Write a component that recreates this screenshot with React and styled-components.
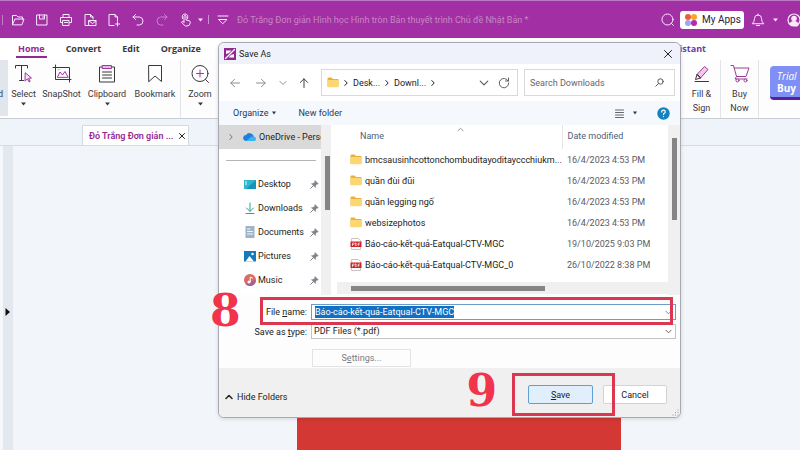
import React from "react";
import styled, { createGlobalStyle } from "styled-components";

const Global = createGlobalStyle`
  * { box-sizing: border-box; }
  body { margin: 0; overflow: hidden; }
  body, button, input, select { font: 9px/12px Roboto, "Open Sans", sans-serif; color: #222; }
  button, input, select { margin: 0; padding: 0; border: 0; background: none; border-radius: 0; outline: 0; }
  svg { display: block; flex: none; }
  u { text-underline-offset: 1px; }
`;

/* ---------- icons ---------- */
const Glyph = styled.svg`
  width: ${(p) => p.$w}px;
  height: ${(p) => p.$h || p.$w}px;
  fill: none;
  stroke: ${(p) => p.$c || "currentColor"};
  stroke-width: ${(p) => p.$s || 1};
  stroke-linecap: round;
  stroke-linejoin: round;
`;
const Icon = ({ w = 14, h = w, c, s, children }) => (
  <Glyph $w={w} $h={h} $c={c} $s={s} viewBox={`0 0 ${w} ${h}`} aria-hidden="true">{children}</Glyph>
);
const Caret = ({ w = 6 }) => (
  <Icon w={w} h={4}><path d={`M0 .5h${w}L${w / 2} 3.500z`} fill="currentColor" stroke="none" /></Icon>
);
const Chevron = ({ dir = "down", w = 8, c, s }) => {
  const d = { down: "M1 2.5 4 5.5 7 2.5", up: "M1 5.5 4 2.5 7 5.5", right: "M2.8 1.5 5.2 4 2.8 6.5" }[dir];
  return <Glyph $w={w} $c={c} $s={s} viewBox="0 0 8 8" aria-hidden="true"><path d={d} /></Glyph>;
};
const Folder = () => (
  <Icon w={12} h={11}>
    <path d="M.5 1.5q0-1 1-1h3l1.500 1.500h5q.5 0 .5.5v7H.5z" fill="#e9b13c" stroke="none" />
    <path d="M.5 3h11v6.500q0 .8-.8.8H1.300q-.8 0-.8-.8z" fill="#fbd671" stroke="none" />
  </Icon>
);
const Pdf = () => (
  <Icon w={12} h={12}>
    <path d="M2 .5h6.500L10.500 2.500v9H2z" fill="#fff" stroke="#b9a9aa" strokeWidth=".7" />
    <path d="M.5 3.500h11v5.500H.5z" fill="#cf2329" stroke="none" />
    <path d="M2.500 7.700V5h1q.8 0 .8.7t-.8.7h-1M5.300 5v2.700q1.700 0 1.700-1.300T5.300 5M8.300 7.700V5h1.400M8.300 6.300h1.100" stroke="#fff" strokeWidth=".6" />
  </Icon>
);
const Pin = () => (
  <Icon w={9} h={9} c="#7d848b">
    <path d="M5.300.8 8.200 3.700 6.800 4.300 5.500 5.700 5.300 7.500 1.500 3.700 3.300 3.500 4.600 2.200z" fill="#7d848b" strokeWidth=".6" />
    <path d="M3.200 5.800.8 8.200" />
  </Icon>
);
const UserIcon = () => (
  <Icon w={14} s={1.2}><circle cx="7" cy="7" r="6" /><circle cx="7" cy="5.500" r="2.200" fill="currentColor" /><path d="M3 11q.8-2.500 4-2.500t4 2.500-4 1.500T3 11" fill="currentColor" /></Icon>
);

/* ---------- application frame ---------- */
const Window = styled.div`
  position: relative;
  display: flex;
  flex-direction: column;
  height: 100vh;
  overflow: hidden;
  background: #f2f6fa;
`;
const TitleBar = styled.header`
  display: flex;
  align-items: center;
  flex: none;
  height: 38px;
  border-top: 1px solid #bd7bc4;
  background: #a32fa5;
  color: #fbeafb;
`;
const QuickTools = styled.div`
  display: flex;
  align-items: center;
  border-left: 1px solid #c77bc8;
  margin-left: 2px;
  padding-left: 3px;
  height: 10px;
`;
const BarButton = styled.button`
  display: grid;
  place-items: center;
  flex: none;
  width: ${(p) => p.$w || 24}px;
  height: 24px;
  color: ${(p) => (p.$dim ? "#cb83cc" : "#fbeafb")};
`;
const Split = styled.span`
  width: 1px;
  height: 9px;
  background: #cf8fd0;
`;
const DocTitle = styled.div`
  flex: 1;
  min-width: 0;
  padding-left: 4px;
  overflow: hidden;
  white-space: nowrap;
  color: #c986c4;
`;
const AccountTools = styled.div`
  display: flex;
  align-items: center;
  flex: none;
  width: 144px;
  overflow: hidden;
`;
const MyApps = styled.button`
  display: flex;
  align-items: center;
  flex: none;
  gap: 5px;
  width: 64px;
  height: 18px;
  padding-left: 5px;
  border-radius: 3px;
  background: #fff;
  font-size: 10px;
  color: #2b2330;
`;
const Tabs = styled.nav`
  display: flex;
  align-items: flex-start;
  flex: none;
  height: 22px;
  padding: 5px 92px 0 16px;
  gap: 17px;
  background: #fff;
  font-family: "Open Sans", sans-serif;
`;
const Tab = styled.a`
  padding: 0 2px 1px;
  border-bottom: 2px solid ${(p) => (p.$active ? "#95298f" : "transparent")};
  color: ${(p) => (p.$active ? "#95298f" : p.$accent ? "#6740a8" : "#3a3a3e")};
  font-weight: 700;
  text-decoration: none;
  margin-left: ${(p) => (p.$accent ? "auto" : 0)};
`;
const Ribbon = styled.div`
  display: flex;
  flex: none;
  height: 59px;
  border-bottom: 1px solid #c9cdd4;
  background: #fdfdfe;
`;
const Tool = styled.button`
  display: flex;
  flex-direction: column;
  align-items: center;
  flex: none;
  width: ${(p) => p.$w}px;
  padding-top: 4px;
  line-height: 14px;
  color: #38383c;
  white-space: nowrap;
  border-right: ${(p) => (p.$rule ? "1px solid #e2e4ea" : "0")};
  svg + span { margin-top: 4px; }
  span + svg { margin-top: 1px; }
`;
const HandTool = styled.button`
  display: flex;
  align-items: center;
  justify-content: flex-end;
  flex: none;
  width: 8px;
  height: 56px;
  overflow: hidden;
  background: #e1e5ec;
  padding: 12px 5px 0 0;
  color: #33415c;
`;
const Spacer = styled.div`
  flex: 1;
`;
const Trial = styled.button`
  display: flex;
  flex-direction: column;
  justify-content: center;
  align-self: flex-start;
  flex: none;
  width: 30px;
  height: 34px;
  margin: 6px 0 0 11px;
  padding-left: 7px;
  border-bottom: 3px solid #5a1f9c;
  border-radius: 4px 0 0 4px;
  background: #7f8ff5;
  color: #fff;
  font: 10px/12px "Open Sans", sans-serif;
  text-align: left;
`;
const DocTabs = styled.div`
  display: flex;
  align-items: flex-end;
  flex: none;
  height: 27px;
  padding-left: 82px;
  border-bottom: 1px solid #d7dce4;
  background: #eff3fa;
`;
const DocTab = styled.div`
  display: flex;
  align-items: center;
  justify-content: space-between;
  width: 107px;
  height: 20px;
  padding: 0 1px 0 6px;
  border: 1px solid #d7dae2;
  border-bottom: 0;
  background: #fff;
  color: #95298f;
  font-weight: 600;
  white-space: nowrap;
`;
const CloseButton = styled.button`
  display: grid;
  place-items: center;
  width: 10px;
  height: 12px;
  color: #222;
`;
const Canvas = styled.main`
  display: flex;
  flex: 1;
  min-height: 0;
`;
const SideHandle = styled.button`
  display: flex;
  align-items: center;
  width: 13px;
  padding: 28px 0 0 2px;
  border-left: 3px solid #f5f7fa;
  background: #e3e8ef;
  color: #111;
`;
const Sheet = styled.div`
  width: 324px;
  margin: 24px 0 0 284px;
  background: #d33835;
`;

/* ---------- dialog ---------- */
const Dialog = styled.section`
  position: absolute;
  top: 42px;
  left: 218px;
  right: 119px;
  min-width: 440px;
  border: 1px solid #a9a9b3;
  border-radius: 6px;
  background: #fff;
  box-shadow: 0 1px 4px #0002;
`;
const DialogTitle = styled.div`
  display: flex;
  align-items: center;
  gap: 3px;
  height: 21px;
  padding: 0 7px 0 5px;
  border-radius: 6px 6px 0 0;
  background: #eff2fa;
`;
const NavRow = styled.div`
  display: flex;
  align-items: center;
  height: 37px;
  padding: 0 5px 0 4px;
`;
const NavButton = styled.button`
  display: grid;
  place-items: center;
  flex: none;
  width: ${(p) => p.$w || 24}px;
  height: 20px;
  color: ${(p) => (p.$dim ? "#8d8d92" : "#404045")};
`;
const Box = styled.div`
  display: flex;
  align-items: center;
  height: 27px;
  border: 1px solid #d8d8df;
  background: #fff;
`;
const Address = styled(Box)`
  flex: 1;
  min-width: 0;
  gap: 3px;
  padding: 0 1px 0 5px;
  margin: 0 6px 0 4px;
`;
const Search = styled(Box)`
  width: 151px;
  flex: none;
  padding-right: 10px;
`;
const SearchInput = styled.input`
  flex: 1;
  min-width: 0;
  padding-left: 5px;
  &::placeholder { color: #66666c; opacity: 1; }
`;
const Toolbar = styled.div`
  display: flex;
  align-items: center;
  height: 24px;
  padding: 0 10px 0 14px;
  background: #f5f8fc;
`;
const ToolbarButton = styled.button`
  display: flex;
  align-items: center;
  gap: 4px;
  margin-right: ${(p) => p.$gap || 0}px;
  color: #243a5c;
`;
const Browser = styled.div`
  display: flex;
  height: 170px;
`;
const Places = styled.div`
  width: 102px;
  flex: none;
  overflow: hidden;
`;
const Place = styled.button`
  display: flex;
  align-items: center;
  width: 102px;
  height: 24px;
  gap: 2px;
  padding: 0 2px 0 ${(p) => (p.$root ? 8 : 25)}px;
  background: ${(p) => (p.$root ? "#d9d9d9" : "transparent")};
  white-space: nowrap;
  overflow: hidden;
  svg:first-child { margin-right: ${(p) => (p.$root ? 6 : 0)}px; }
  span { flex: 1; text-align: left; }
`;
const Rule = styled.hr`
  margin: 11px 5px 11px 7px;
  border: 0;
  border-top: 1px solid #b5b5b9;
`;
const Track = styled.div`
  flex: none;
  width: ${(p) => p.$w}px;
  padding: ${(p) => p.$top}px ${(p) => (p.$edge ? 1 : 3)}px 0 4px;
  background: #f0f0f1;
  border-right: ${(p) => (p.$edge ? "1px solid #fff" : "0")};
`;
const Thumb = styled.div`
  height: ${(p) => p.$h}px;
  background: #858585;
`;
const Files = styled.div`
  display: flex;
  flex-direction: column;
  flex: 1;
  min-width: 0;
  margin-left: 3px;
`;
const TableArea = styled.div`
  height: 157px;
  overflow: hidden;
`;
const FileTable = styled.table`
  width: 100%;
  table-layout: fixed;
  border-collapse: collapse;
  th, td { padding: 0; text-align: left; white-space: nowrap; }
  th { height: 24px; padding-bottom: 3px; font-weight: 400; color: #4c5e7c; }
  td { height: 21px; }
  th:first-child { padding-left: 25px; }
  th:last-child { width: 106px; padding-left: 5px; border-left: 1px solid #e6e6ea; }
  td:last-child { padding-left: 5px; color: #5b5b60; }
`;
const NameHead = styled.div`
  display: grid;
  grid-template-columns: 1fr 1fr 1fr;
  align-items: center;
  svg { justify-self: center; margin-top: -12px; }
`;
const FileName = styled.div`
  display: flex;
  align-items: center;
  gap: 3px;
  padding-left: 15px;
`;
const HTrack = styled.div`
  height: 12px;
  margin-left: 2px;
  padding: 4px 123px 3px 14px;
  background: #f0f0f1;
`;
const Form = styled.form`
  display: grid;
  grid-template-columns: 88px 1fr;
  gap: 3px 4px;
  height: 73px;
  padding: 9px 4px 0 0;
  background: #fdfdfd;
`;
const Label = styled.label`
  text-align: right;
  line-height: 16px;
`;
const Field = styled.div`
  position: relative;
  display: flex;
  align-items: center;
  justify-content: space-between;
  height: ${(p) => (p.$focus ? 16 : 15)}px;
  padding: 0 3px 0 2px;
  border: 1px solid ${(p) => (p.$focus ? "#6d9cc8" : "#c4c4c8")};
  background: #fff;
`;
const NameInput = styled.input`
  field-sizing: content;
  height: 12px;
  margin-left: 1px;
  background: #0f70c4;
  color: #fff;
`;
const TypeSelect = styled.select`
  appearance: none;
  flex: 1;
  height: 13px;
  color: #222;
`;
const Settings = styled.button`
  grid-column: 2;
  width: 99px;
  height: 18px;
  margin: 6px 0 0 1px;
  border: 1px solid #e3e3e6;
  color: #7a7a80;
`;
const Footer = styled.footer`
  display: flex;
  align-items: center;
  height: 49px;
  padding: 4px 13px 0 6px;
  border-radius: 0 0 6px 6px;
  background: #f0f0f1;
`;
const HideButton = styled.button`
  display: flex;
  align-items: center;
  gap: 4px;
  margin: 4px auto 0 0;
`;
const Action = styled.button`
  position: relative;
  width: ${(p) => (p.$primary ? 65 : 64)}px;
  height: 19px;
  margin-left: 10px;
  border: 1px solid ${(p) => (p.$primary ? "#5e9fd4" : "#d3d3d6")};
  border-radius: 2px;
  background: ${(p) => (p.$primary ? "#e0effb" : "#fff")};
`;
const Grip = styled.div`
  position: absolute;
  right: 1px;
  bottom: 1px;
  color: #8e8e92;
`;

/* ---------- tutorial marks ---------- */
const Frame = styled.div`
  position: absolute;
  z-index: 2;
  inset: ${(p) => p.$inset};
  border: 3px solid #dc3750;
  pointer-events: none;
`;
const Step = styled.div`
  position: absolute;
  z-index: 2;
  top: ${(p) => p.$top}px;
  left: ${(p) => p.$left || "auto"};
  right: ${(p) => p.$right || "auto"};
  color: #f2334c;
  font: 700 44px/44px "DejaVu Serif", serif;
`;

const quick = [
  ["Open", <path d="M1.500 11.500V2.500h4l1.500 1.500h4.500v2M1.500 11.500 4 6h9l-2 5.500z" />],
  ["Save", <path d="M2 2h10v10H2zM4.500 2v4h5V2M8 3.500v1" />],
  ["Print", <path d="M4 4V1.500h6V4M3.500 9.500H1.500V4.500h11v5h-2M4 7.500h6v5H4zM5.500 9.500h3" />],
  ["Email", <path d="M5 12.500H2v-11h5.500L10 4v2M7.500 1.500V4H10M6 7.500h7v5H6zM6 8l3.500 2.500L13 8" />],
  ["New", <path d="M7 12.500H2v-11h6l2.500 2.500v4M8 1.500V4h2.500M10.500 9v4M8.500 11h4" />],
  ["Undo", <path d="M4.500 1.500 2 4l2.500 2.500M2 4h6.500q3.500.5 3.500 4t-3.500 4H6" />],
  ["Redo", <path d="M9.500 1.500 12 4 9.500 6.500M12 4H5.500Q2 4.500 2 8t3.500 4H8" />, true],
  ["Touch", <path d="M5 9V3.500q0-1 1-1t1 1V7l3 .7q1.500.3 1.300 2-.3 3.300-3.300 3.300H6.500Q5 12.500 2.500 9q.7-1.300 2.500 0M3.400 5.500Q2.500 1 6 1t2.600 4.500" />],
];

const Select = <Icon w={20} h={19}><path d="M1.500 4V1.500h12V4M7.500 1.500v15M5.500 16.500h4" /><path d="m11.500 9 6 5-3 .3 1.700 3-1.200.6-1.700-3-2 2z" fill="#f8e5f8" stroke="#a2369f" /></Icon>;
const Snap = <Icon w={20} h={19}><path d="M1 3.500h16.500V18M3.500 1v14.500H19" /><path d="M5.500 13 8 8l2.500 3L13 7.500l3 5.500zM6.500 6l.5-.5" stroke="#a2369f" /></Icon>;
const Clip = <Icon w={20} h={19}><path d="M5.500 3h-3v15h15V3h-3M5.500 8h9M5.500 11h9M5.500 14h9" /><path d="M5.500 1.500h9v3h-9z" fill="#e7b9e8" stroke="#a2369f" /></Icon>;
const Mark = <Icon w={20} h={19}><path d="M4 1.500h12.500v16L10 12l-6 5.500z" /></Icon>;
const Zoom = <Icon w={20} h={19}><circle cx="10" cy="9.500" r="8" /><path d="m15.500 15.500 3 3" /><path d="M10 6v7M6.500 9.500h7" stroke="#a2369f" /></Icon>;
const Fill = <Icon w={20} h={19}><path d="M5 10.500 12.500 2.500l3.500 3-7.500 8.500z" fill="#f6c7f1" stroke="#96458f" /><path d="m5 10.500-1.500 5 5-1.500zM3 17.500h13.500" /></Icon>;
const Cart = <Icon w={20} h={19} c="#993c92"><path d="M1 1.500h2.500l3 11h9.500L19 4H4.300M6.500 12.500 5 15h12" /><circle cx="7.500" cy="16.500" r="1.500" fill="#fff" /><circle cx="15.500" cy="16.500" r="1.500" fill="#fff" /></Icon>;

const places = [
  ["Desktop", <Icon w={12}><path d="M0 2h12v9H0z" fill="#1695bb" stroke="none" /><path d="M0 2h12L2 11H0z" fill="#32b5cd" stroke="none" /><path d="M1.500 4h1M1.500 6h1" stroke="#fff" /></Icon>],
  ["Downloads", <Icon w={12} c="#29a39a"><path d="M6 1v8M2.500 6 6 9.500 9.500 6M2 11.500h8" /></Icon>],
  ["Documents", <Icon w={12}><path d="M1.500 0h9v12h-9z" fill="#9fb4c9" stroke="none" /><path d="M3.500 3H6M3.500 5.500h5M3.500 8h5" stroke="#f4f8fc" /></Icon>],
  ["Pictures", <Icon w={12}><path d="M0 1h12v10.500H0z" fill="#1479bd" stroke="none" /><path d="M1.500 11.500 5.500 6l4.500 5.500z" fill="#fff" stroke="none" /><circle cx="8.500" cy="4" r="1.200" fill="#fff" stroke="none" /></Icon>],
  ["Music", <Icon w={12}><circle cx="6" cy="6" r="6" fill="#d96b62" stroke="none" /><path d="M1.800 10.200A6 6 0 0 0 12 6Q8 7 1.800 10.200" fill="#a85d9c" stroke="none" /><circle cx="5" cy="8" r="1.500" fill="#fff" stroke="none" /><path d="M6.200 8V3l2.300 1" stroke="#fff" /></Icon>],
];

const files = [
  ["bmcsausinhcottonchombuditayoditayccchiukm...", "16/4/2023 4:53 PM", Folder],
  ["quần đùi đũi", "16/4/2023 4:53 PM", Folder],
  ["quần legging ngố", "16/4/2023 4:53 PM", Folder],
  ["websizephotos", "16/4/2023 4:53 PM", Folder],
  ["Báo-cáo-kết-quả-Eatqual-CTV-MGC", "19/10/2025 9:03 PM", Pdf],
  ["Báo-cáo-kết-quả-Eatqual-CTV-MGC_0", "26/10/2022 8:38 PM", Pdf],
];

const ToolItem = ({ icon, label, second, menu, w, rule }) => (
  <Tool $w={w} $rule={rule}>
    {icon}
    <span>{label}{second && <><br />{second}</>}</span>
    {menu && <Caret w={5} />}
  </Tool>
);

function SaveDialog() {
  return (
    <Dialog role="dialog" aria-label="Save As">
      <DialogTitle>
        <Icon w={12}>
          <path d="M0 0h12v12H0z" fill="#93278f" stroke="none" />
          <path d="M2 2.500h5.500L5 5 2 6zM10 9.500H4.500L7 7l3-1z" fill="#fff" stroke="none" />
          <path d="M1.500 10.500 10.500 1.500" stroke="#fff" strokeWidth="1.300" />
        </Icon>
        <span>Save As</span>
        <Spacer />
        <CloseButton aria-label="Close"><Icon w={8}><path d="m.5.5 7 7m0-7-7 7" /></Icon></CloseButton>
      </DialogTitle>
      <NavRow>
        <NavButton $dim aria-label="Back"><Icon w={10}><path d="M9.500 5H.8M4.500 1.300.8 5l3.700 3.700" /></Icon></NavButton>
        <NavButton $w={28} $dim aria-label="Forward"><Icon w={10}><path d="M.5 5h8.700M5.500 1.300 9.200 5 5.500 8.700" /></Icon></NavButton>
        <NavButton $w={16} $dim aria-label="Recent"><Chevron /></NavButton>
        <NavButton $w={26} aria-label="Up"><Icon w={10}><path d="M5 9.500V.8M1.300 4.500 5 .8l3.700 3.700" /></Icon></NavButton>
        <Address>
          <Folder />
          <Chevron dir="right" /><span>Desk...</span>
          <Chevron dir="right" /><span>Downl...</span>
          <Chevron dir="right" />
          <Spacer />
          <Chevron w={10} c="#606066" />
          <NavButton aria-label="Refresh"><Icon w={12} c="#606066"><path d="M10.200 4A4.700 4.700 0 1 0 10.700 6M10.500 1v3h-3" /></Icon></NavButton>
        </Address>
        <Search>
          <SearchInput aria-label="Search Downloads" placeholder="Search Downloads" />
          <Icon w={9} c="#55555a"><circle cx="5.500" cy="3.500" r="2.700" /><path d="M3.500 5.500.8 8.200" /></Icon>
        </Search>
      </NavRow>
      <Toolbar>
        <ToolbarButton $gap={22}>Organize <Caret w={4} /></ToolbarButton>
        <ToolbarButton>New folder</ToolbarButton>
        <Spacer />
        <ToolbarButton $gap={20} aria-label="View">
          <Icon w={14} h={9} c="#66666b"><path d="M.5 1h8M.5 3.500h8M.5 6h8M.5 8.500h8" /></Icon>
          <Caret w={4} />
        </ToolbarButton>
        <ToolbarButton aria-label="Help">
          <Icon w={13} c="#fff"><circle cx="6.500" cy="6.500" r="6.200" fill="#1682bd" stroke="none" /><path d="M4.700 5q0-1.800 1.800-1.800T8.300 5q0 .8-1 1.300-.8.500-.8 1.300M6.500 9.500v.1" strokeWidth="1.200" /></Icon>
        </ToolbarButton>
      </Toolbar>
      <Browser>
        <Places>
          <Place $root>
            <Chevron dir="right" c="#777" />
            <Icon w={14} h={10}><path d="M1.500 8.500A3 3 0 0 1 3 3Q5 0 8 1.500t2.500 3A2.700 2.700 0 0 1 11 9H3z" fill="#1e7fe0" stroke="none" /><path d="m3 9 5.500-4.500 3 .2A2.200 2.200 0 0 1 11 9z" fill="#36b4f3" stroke="none" /></Icon>
            <span>OneDrive - Personal</span>
          </Place>
          <Rule />
          {places.map(([name, icon]) => (
            <Place key={name}>{icon}<span>{name}</span><Pin /></Place>
          ))}
        </Places>
        <Track $w={11} $top={31} $edge><Thumb $h={54} /></Track>
        <Files>
          <TableArea>
            <FileTable>
              <thead><tr>
                <th><NameHead>Name<Chevron dir="up" c="#888" w={7} /></NameHead></th>
                <th>Date modified</th>
              </tr></thead>
              <tbody>
                {files.map(([name, date, Type]) => (
                  <tr key={name}>
                    <td><FileName><Type /><span>{name}</span></FileName></td>
                    <td>{date}</td>
                  </tr>
                ))}
              </tbody>
            </FileTable>
          </TableArea>
          <HTrack><Thumb $h={5} /></HTrack>
        </Files>
        <Track $w={12} $top={13}><Thumb $h={82} /></Track>
      </Browser>
      <Form onSubmit={(e) => e.preventDefault()}>
        <Label htmlFor="file-name">File <u>n</u>ame:</Label>
        <Field $focus>
          <NameInput id="file-name" defaultValue="Báo-cáo-kết-quả-Eatqual-CTV-MGC" />
          <Chevron c="#777" w={7} />
          <Frame $inset="-8px 2px -6px -52px" />
        </Field>
        <Label htmlFor="file-type">Save as <u>t</u>ype:</Label>
        <Field>
          <TypeSelect id="file-type"><option>PDF Files (*.pdf)</option></TypeSelect>
          <Chevron c="#555" w={7} />
        </Field>
        <Settings type="button">S<u>e</u>ttings...</Settings>
      </Form>
      <Footer>
        <HideButton><Chevron dir="up" s={1.5} /> Hide Folders</HideButton>
        <Action $primary><u>S</u>ave<Frame $inset="-13px -23px -13px -17px" /></Action>
        <Action>Cancel</Action>
      </Footer>
      <Grip><Icon w={7}><path d="M6 1v.1M6 3.500v.1M6 6v.1M3.500 3.500v.1M3.500 6v.1M1 6v.1" /></Icon></Grip>
      <Step $top={246} $left="-9px">8</Step>
      <Step $top={326} $right="183px">9</Step>
    </Dialog>
  );
}

export default function App() {
  return (
    <Window>
      <Global />
      <TitleBar>
        <QuickTools>
          {quick.map(([name, drawing, dim]) => (
            <BarButton key={name} aria-label={name} $dim={dim}><Icon>{drawing}</Icon></BarButton>
          ))}
          <BarButton $w={5} aria-label="Touch options"><Caret w={5} /></BarButton>
        </QuickTools>
        <BarButton $w={10} as="span"><Split /></BarButton>
        <BarButton $w={20} aria-label="Customize"><Icon w={12} h={10}><path d="M1 1h10M2 4.500h8L6 8.500z" /></Icon></BarButton>
        <DocTitle>Đỏ Trắng Đơn giản Hình học Hình tròn Bản thuyết trình Chủ đề Nhật Bản *</DocTitle>
        <AccountTools>
          <BarButton aria-label="Search"><Icon><circle cx="6.500" cy="6.500" r="5.500" /><path d="m10.500 10.500 2 2" /></Icon></BarButton>
          <MyApps>
            <Icon w={12}>
              <circle cx="3" cy="3" r="3" fill="#ef5b36" stroke="none" /><circle cx="9" cy="3" r="3" fill="#f6a725" stroke="none" />
              <circle cx="3" cy="9" r="3" fill="#a5a2ee" stroke="none" /><circle cx="9" cy="9" r="3" fill="#b32aaa" stroke="none" />
            </Icon>
            My Apps
          </MyApps>
          <BarButton $w={28} aria-label="Notifications"><Icon><path d="M1.500 10.500Q3.500 9 3.500 5.500 3.500 2 7 2t3.500 3.500q0 3.500 2 5zM5.500 12.500h3M7 1v1" /></Icon></BarButton>
          <BarButton $w={6} aria-label="Notification options"><Caret w={5} /></BarButton>
          <BarButton $w={32} aria-label="Account"><UserIcon /></BarButton>
        </AccountTools>
      </TitleBar>
      <Tabs>
        <Tab href="#home" $active>Home</Tab>
        <Tab href="#convert">Convert</Tab>
        <Tab href="#edit">Edit</Tab>
        <Tab href="#organize">Organize</Tab>
        <Tab href="#assistant" $accent>AI Assistant</Tab>
      </Tabs>
      <Ribbon>
        <HandTool>Hand</HandTool>
        <ToolItem icon={Select} label="Select" menu w={31} />
        <ToolItem icon={Snap} label="SnapShot" w={45} />
        <ToolItem icon={Clip} label="Clipboard" menu w={46} />
        <ToolItem icon={Mark} label="Bookmark" w={51} rule />
        <ToolItem icon={Zoom} label="Zoom" menu w={38} />
        <Spacer />
        <ToolItem icon={Fill} label="Fill &" second="Sign" w={38} rule />
        <ToolItem icon={Cart} label="Buy" second="Now" w={38} rule />
        <Trial><i>Trial</i><b>Buy</b></Trial>
      </Ribbon>
      <DocTabs>
        <DocTab>
          Đỏ Trắng Đơn giản ...
          <CloseButton aria-label="Close tab"><Icon w={6}><path d="m.5.500 5 5m0-5-5 5" /></Icon></CloseButton>
        </DocTab>
      </DocTabs>
      <Canvas>
        <SideHandle aria-label="Expand panel"><Icon w={5} h={8}><path d="M.5 0 5 4 .5 8z" fill="currentColor" stroke="none" /></Icon></SideHandle>
        <Sheet />
      </Canvas>
      <SaveDialog />
    </Window>
  );
}
